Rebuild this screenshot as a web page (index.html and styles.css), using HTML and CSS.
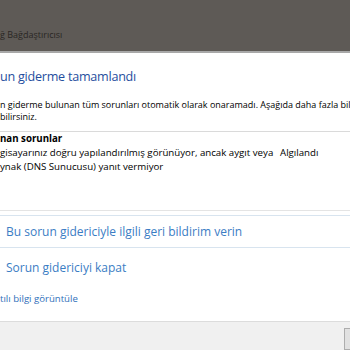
FILE: index.html
```html
<!DOCTYPE html>
<html lang="tr">
<head>
<meta charset="utf-8">
<link rel="stylesheet" href="styles.css">
</head>
<body>
<div class="window">
  <header class="titlebar"><span class="title">ğ Bağdaştırıcısı</span></header>
  <main class="content">
    <h1 class="heading">un giderme tamamlandı</h1>
    <p class="desc"><span class="line">n giderme bulunan tüm sorunları otomatik olarak onaramadı. Aşağıda daha fazla bilgi bula</span><span class="line">bilirsiniz.</span></p>
    <div class="issues">
      <div class="issues-head">nan sorunlar</div>
      <div class="issue">
        <div class="issue-text"><span class="line">gisayarınız doğru yapılandırılmış görünüyor, ancak aygıt veya</span><span class="line">ynak (DNS Sunucusu) yanıt vermiyor</span></div>
        <div class="issue-status">Algılandı</div>
      </div>
    </div>
    <div class="actions">
      <a class="action action-first" href="#">Bu sorun gidericiyle ilgili geri bildirim verin</a>
      <a class="action action-last" href="#">Sorun gidericiyi kapat</a>
    </div>
    <a class="details" href="#">tılı bilgi görüntüle</a>
  </main>
  <footer class="footer"><button class="btn" type="button"></button></footer>
</div>
</body>
</html>
```
FILE: styles.css
```css
html, body {
  margin: 0;
  padding: 0;
}
body {
  width: 350px;
  height: 350px;
  overflow: hidden;
  font-family: "Open Sans", "Noto Sans", sans-serif;
  color: #000;
  background: #fff;
}
.window {
  display: flex;
  flex-direction: column;
  width: 350px;
  height: 350px;
  overflow: hidden;
}
.titlebar {
  box-sizing: border-box;
  height: 53px;
  padding-top: 29px;
  background: #5e5a56;
  border-bottom: 2px solid #a8a8a8;
  flex: none;
}
.title {
  display: block;
  font-size: 9px;
  line-height: 12px;
  color: #2a2724;
  white-space: nowrap;
}
.content {
  height: 268px;
  flex: none;
  display: flex;
  flex-direction: column;
  overflow: hidden;
}
.heading {
  margin: 14px 0 0;
  font-size: 12.6px;
  font-weight: normal;
  letter-spacing: -0.25px;
  line-height: 20px;
  color: #1f4e9e;
  white-space: nowrap;
}
.desc {
  margin: 12px 0 0;
  font-size: 9px;
  line-height: 12px;
  white-space: nowrap;
}
.line {
  display: block;
}
.issues {
  margin-top: 8px;
  border-top: 1px solid #dadada;
  font-size: 9.7px;
  line-height: 14px;
}
.issues-head {
  font-weight: bold;
  white-space: nowrap;
}
.issue {
  display: grid;
  grid-template-columns: 280px 1fr;
  white-space: nowrap;
}
.actions {
  margin-top: 36px;
  border-top: 1px solid #e4e4e4;
  padding-top: 4px;
  display: flex;
  flex-direction: column;
}
.action {
  display: block;
  padding-left: 6px;
  font-size: 12px;
  color: #3b7dc4;
  text-decoration: none;
  white-space: nowrap;
}
.action-first {
  line-height: 31px;
  border-top: 1px solid #d8e4ef;
  border-bottom: 1px solid #d8e4ef;
}
.action-last {
  line-height: 40px;
}
.details {
  margin-top: 4px;
  font-size: 9.6px;
  line-height: 14px;
  color: #2f6fba;
  text-decoration: none;
  white-space: nowrap;
}
.footer {
  flex: 1;
  background: #f0f0f0;
  border-top: 1px solid #dcdcdc;
  padding: 6px 0 0 344px;
}
.btn {
  display: block;
  width: 70px;
  height: 22px;
  margin: 0;
  padding: 0;
  background: #e1e1e1;
  border: 1px solid #adadad;
}
```
